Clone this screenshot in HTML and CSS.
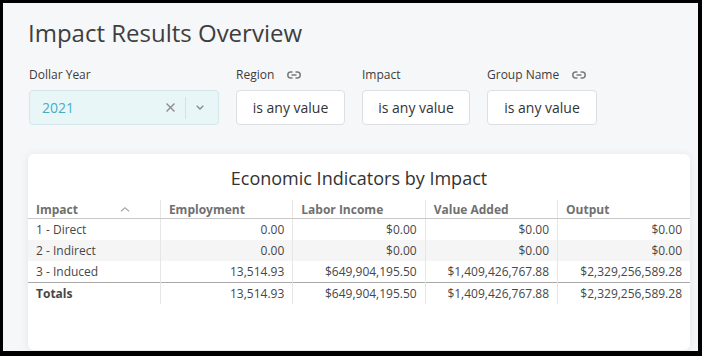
FILE: index.html
```html
<!DOCTYPE html>
<html lang="en">
<head>
    <meta charset="UTF-8">
    <meta name="viewport" content="width=device-width, initial-scale=1.0">
    <title>Impact Results Overview</title>
    <link rel="stylesheet" href="styles.css">
</head>
<body>
    <div class="page">
        <h1 class="title">Impact Results Overview</h1>

        <div class="filters">
            <div class="filter filter-year">
                <div class="filter-label">Dollar Year</div>
                <div class="select">
                    <span class="select-value">2021</span>
                    <svg class="icon-clear" width="9" height="9" viewBox="0 0 9 9">
                        <path d="M0.5 0.5 L8.5 8.5 M8.5 0.5 L0.5 8.5" stroke="#8c8c8c" stroke-width="1.4" fill="none"/>
                    </svg>
                    <span class="select-sep"></span>
                    <svg class="icon-chevron" width="8" height="5" viewBox="0 0 8 5">
                        <path d="M0.7 0.7 L4 4 L7.3 0.7" stroke="#8c8c8c" stroke-width="1.4" fill="none"/>
                    </svg>
                </div>
            </div>
            <div class="filter filter-region">
                <div class="filter-label">Region
                    <svg class="icon-link" width="14" height="8" viewBox="0 0 14 8">
                        <path d="M5.5 1 H3.8 A2.8 2.8 0 0 0 3.8 7 H5.5 M8.5 1 H10.2 A2.8 2.8 0 0 1 10.2 7 H8.5 M4.5 4 H9.5" stroke="#7a7a7a" stroke-width="1.5" fill="none"/>
                    </svg>
                </div>
                <div class="box">is any value</div>
            </div>
            <div class="filter filter-impact">
                <div class="filter-label">Impact</div>
                <div class="box">is any value</div>
            </div>
            <div class="filter filter-group">
                <div class="filter-label">Group Name
                    <svg class="icon-link" width="14" height="8" viewBox="0 0 14 8">
                        <path d="M5.5 1 H3.8 A2.8 2.8 0 0 0 3.8 7 H5.5 M8.5 1 H10.2 A2.8 2.8 0 0 1 10.2 7 H8.5 M4.5 4 H9.5" stroke="#7a7a7a" stroke-width="1.5" fill="none"/>
                    </svg>
                </div>
                <div class="box">is any value</div>
            </div>
        </div>

        <div class="card">
            <div class="card-title">Economic Indicators by Impact</div>
            <table class="grid">
                <thead>
                    <tr>
                        <th class="col-first">Impact
                            <svg class="icon-sort" width="10" height="5" viewBox="0 0 10 5">
                                <path d="M1 4.3 L5 0.8 L9 4.3" stroke="#a8a8a8" stroke-width="1.2" fill="none"/>
                            </svg>
                        </th>
                        <th>Employment</th>
                        <th>Labor Income</th>
                        <th>Value Added</th>
                        <th>Output</th>
                    </tr>
                </thead>
                <tbody>
                    <tr>
                        <td>1 - Direct</td>
                        <td class="num">0.00</td>
                        <td class="num">$0.00</td>
                        <td class="num">$0.00</td>
                        <td class="num">$0.00</td>
                    </tr>
                    <tr class="band">
                        <td>2 - Indirect</td>
                        <td class="num">0.00</td>
                        <td class="num">$0.00</td>
                        <td class="num">$0.00</td>
                        <td class="num">$0.00</td>
                    </tr>
                    <tr>
                        <td>3 - Induced</td>
                        <td class="num">13,514.93</td>
                        <td class="num">$649,904,195.50</td>
                        <td class="num">$1,409,426,767.88</td>
                        <td class="num">$2,329,256,589.28</td>
                    </tr>
                </tbody>
                <tfoot>
                    <tr>
                        <td class="total-label">Totals</td>
                        <td class="num">13,514.93</td>
                        <td class="num">$649,904,195.50</td>
                        <td class="num">$1,409,426,767.88</td>
                        <td class="num">$2,329,256,589.28</td>
                    </tr>
                </tfoot>
            </table>
        </div>
    </div>
</body>
</html>
```

FILE: styles.css
```css
html {
    background: #000;
}
body {
    margin: 0;
    font-family: "Open Sans", Arial, sans-serif;
    color: #333;
}
.page {
    margin: 3px 4px 5px 3px;
    height: 348px;
    box-sizing: border-box;
    background: #f6f7f9;
    padding: 14px 0 0 25px;
}
.title {
    margin: 0;
    font-size: 24px;
    font-weight: 400;
    line-height: 32px;
    color: #3e3e3e;
}
.filters {
    display: flex;
    gap: 17px;
    margin: 18px 0 0 1px;
}
.filter {
    display: flex;
    flex-direction: column;
}
.filter-year {
    width: 190px;
}
.filter-region {
    width: 109px;
}
.filter-impact {
    width: 108px;
}
.filter-group {
    width: 110px;
}
.filter-label {
    font-size: 12px;
    line-height: 16px;
    color: #3c3c3c;
    margin-bottom: 7px;
    display: flex;
    align-items: center;
}
.icon-link {
    margin-left: 13px;
}
.box {
    height: 35px;
    box-sizing: border-box;
    background: #fff;
    border: 1px solid #dedfe2;
    border-radius: 4px;
    font-size: 14px;
    color: #333;
    display: flex;
    align-items: center;
    justify-content: center;
}
.select {
    height: 35px;
    box-sizing: border-box;
    background: #e9f6f8;
    border: 1px solid #d3e7eb;
    border-radius: 4px;
    display: flex;
    align-items: center;
    padding: 0 14px 0 12px;
}
.select-value {
    flex: 1;
    font-size: 14px;
    color: #44afc4;
}
.select-sep {
    width: 1px;
    height: 22px;
    background: #d3e2e5;
    margin: 0 10px;
}
.card {
    margin: 29px 8px 0 0;
    height: 196px;
    background: #fff;
    border-radius: 6px;
    box-shadow: 0 1px 10px rgba(0, 0, 0, 0.08);
    overflow: hidden;
}
.card-title {
    text-align: center;
    font-size: 18px;
    line-height: 24px;
    padding-top: 12px;
    color: #333;
}
.grid {
    width: 100%;
    margin-top: 10px;
    border-collapse: collapse;
    table-layout: fixed;
    font-size: 12px;
}
.grid th, .grid td {
    height: 21px;
    padding: 0 8px;
    border-left: 1px solid #e6e6e6;
    white-space: nowrap;
}
.grid th:first-child, .grid td:first-child {
    border-left: none;
}
.grid th {
    text-align: left;
    font-weight: 700;
    color: #707070;
    height: 18px;
    border-bottom: 1px solid #c8c8c8;
}
.col-first {
    position: relative;
}
.icon-sort {
    position: absolute;
    right: 30px;
    top: 7px;
}
.grid td {
    color: #474747;
}
.grid .num {
    text-align: right;
}
.band td {
    background: #f5f5f5;
}
.grid tfoot td {
    border-top: 1px solid #a8a8a8;
}
.total-label {
    font-weight: 700;
    color: #666;
}
```
